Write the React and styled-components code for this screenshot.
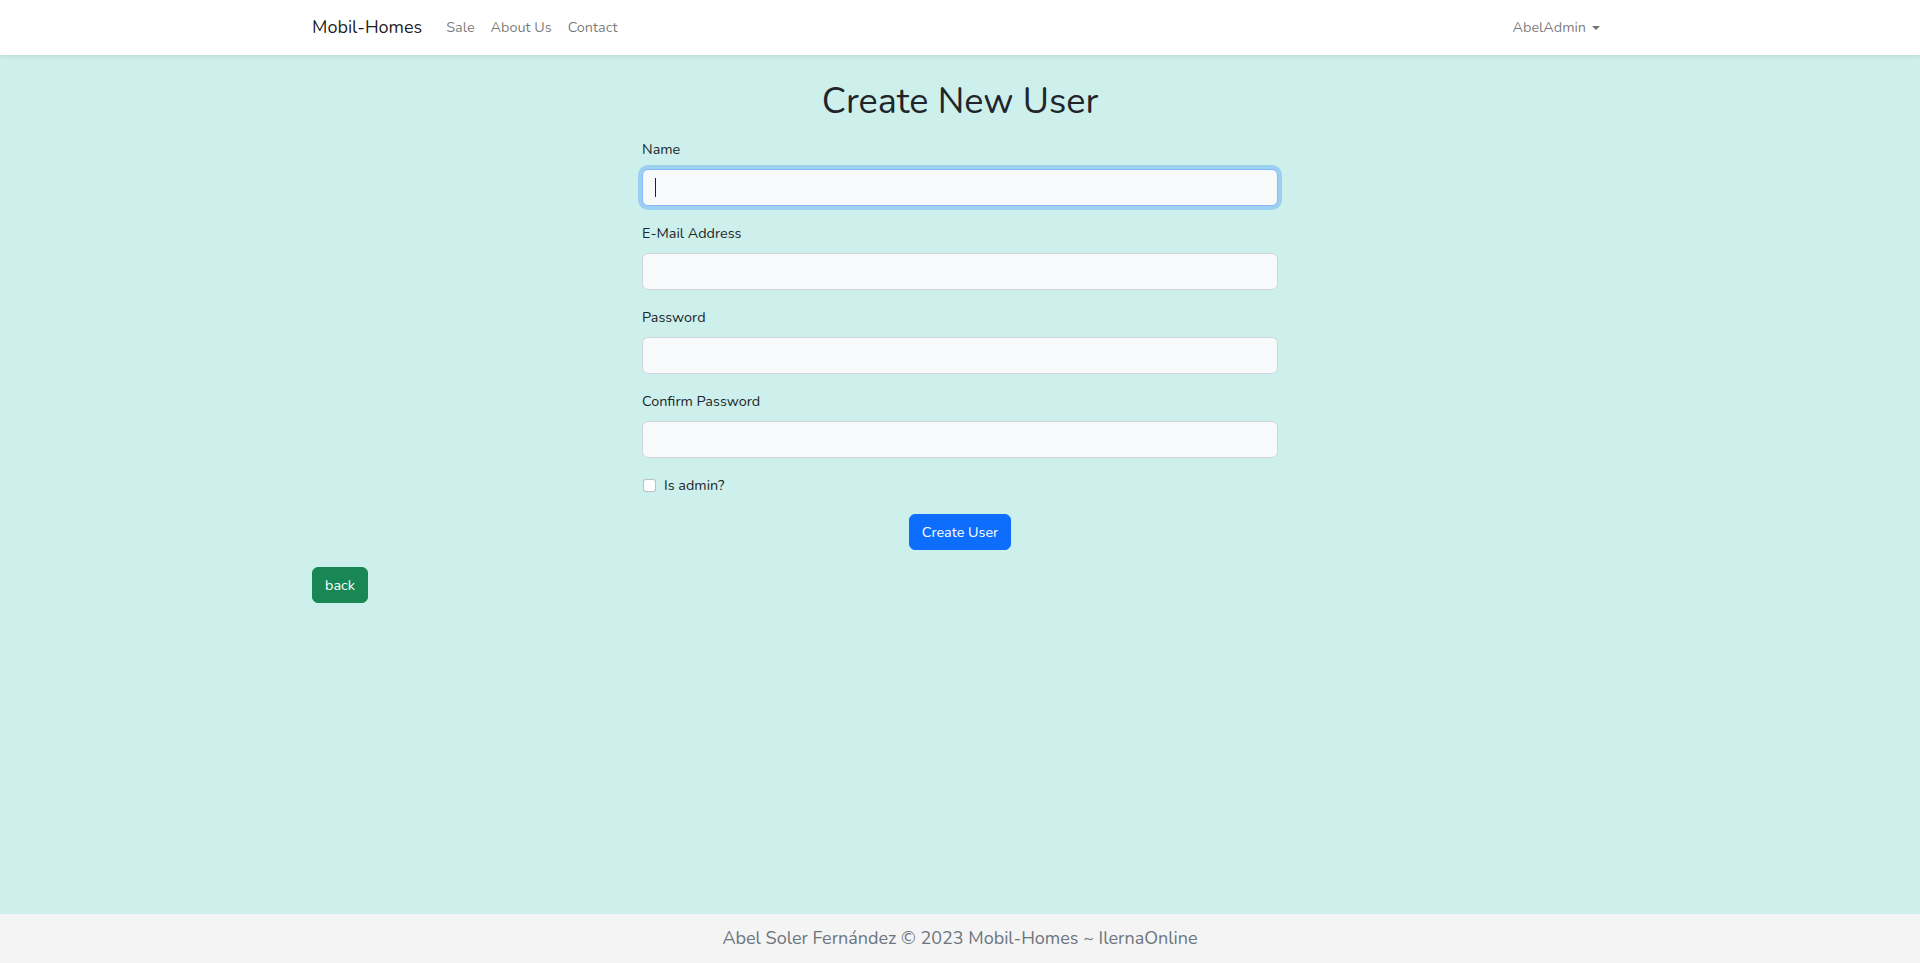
import React from "react";
import styled, { createGlobalStyle } from "styled-components";

const Global = createGlobalStyle`
  * { box-sizing: border-box; }
  html, body { margin: 0; padding: 0; }
  body {
    font-family: "Nunito", Lato, "Noto Sans", sans-serif;
    font-size: 14.4px;
    line-height: 1.6;
    color: #212529;
    background: #cdf0ec;
  }
`;

const Page = styled.div`
  min-height: 100vh;
  display: flex;
  flex-direction: column;
`;

const NavBar = styled.nav`
  height: 55px;
  background: #fff;
  box-shadow: 0 2px 4px rgba(0, 0, 0, 0.075);
  display: flex;
  align-items: center;
`;

const Container = styled.div`
  width: 1320px;
  margin: 0 auto;
  padding: 0 12px;
  display: flex;
  align-items: center;
`;

const Brand = styled.a`
  font-size: 18px;
  color: rgba(0, 0, 0, 0.9);
  text-decoration: none;
  margin-right: 16px;
  padding: 5px 0;
`;

const NavLinks = styled.div`
  display: flex;
  flex: 1;
`;

const NavLink = styled.a`
  color: rgba(0, 0, 0, 0.55);
  text-decoration: none;
  padding: 8px;
  font-size: 14.4px;
  display: flex;
  align-items: center;
`;

const Caret = styled.span`
  display: inline-block;
  margin-left: 6px;
  border-top: 4.3px solid rgba(0, 0, 0, 0.55);
  border-left: 4.3px solid transparent;
  border-right: 4.3px solid transparent;
  margin-top: 1px;
`;

const Main = styled.main`
  flex: 1;
`;

const Title = styled.h1`
  font-size: 36px;
  font-weight: 400;
  line-height: 1.2;
  text-align: center;
  margin: 25px 0 15px;
`;

const Form = styled.form`
  width: 636px;
  margin: 0 auto;
  display: flex;
  flex-direction: column;
`;

const Field = styled.div`
  display: flex;
  flex-direction: column;
  margin-bottom: 16px;
`;

const Label = styled.label`
  font-size: 14.4px;
  line-height: 23px;
  margin-bottom: 8px;
`;

const InputWrap = styled.div`
  position: relative;
  display: flex;
  flex-direction: column;
`;

const TextCaret = styled.span`
  position: absolute;
  left: 13px;
  top: 9px;
  width: 1px;
  height: 19px;
  background: #212529;
  pointer-events: none;
`;

const Input = styled.input`
  height: 37px;
  padding: 5px 12px;
  font: inherit;
  font-size: 14.4px;
  color: #212529;
  background: #f8f9fa;
  border: 1px solid ${(p) => (p.$focused ? "#86b7fe" : "#ced4da")};
  border-radius: 6px;
  outline: none;
  caret-color: transparent;
  box-shadow: ${(p) => (p.$focused ? "0 0 0 4px rgba(13, 110, 253, 0.25)" : "none")};
  &:focus {
    border-color: #86b7fe;
    box-shadow: 0 0 0 4px rgba(13, 110, 253, 0.25);
  }
`;

const CheckRow = styled.div`
  display: flex;
  align-items: center;
  line-height: 23px;
  margin-bottom: 17px;
`;

const Check = styled.span`
  width: 13px;
  height: 13px;
  background: #fff;
  border: 1px solid rgba(0, 0, 0, 0.25);
  border-radius: 3px;
  margin: 0 8px 0 1px;
`;

const Center = styled.div`
  display: flex;
  justify-content: center;
`;

const Button = styled.button`
  font: inherit;
  font-size: 14.4px;
  color: #fff;
  background: ${(p) => p.$bg};
  border: 1px solid ${(p) => p.$bg};
  border-radius: 6px;
  height: 36px;
  padding: 0 12px;
  line-height: 1;
  cursor: pointer;
`;

const BackRow = styled.div`
  width: 1320px;
  margin: 17px auto 0;
  padding: 0 12px;
`;

const Footer = styled.footer`
  height: 49px;
  background: #f4f4f4;
  color: #6c757d;
  font-size: 18px;
  display: flex;
  align-items: center;
  justify-content: center;
`;

export default function App() {
  return (
    <Page>
      <Global />
      <NavBar>
        <Container>
          <Brand href="#">Mobil-Homes</Brand>
          <NavLinks>
            <NavLink href="#">Sale</NavLink>
            <NavLink href="#">About Us</NavLink>
            <NavLink href="#">Contact</NavLink>
          </NavLinks>
          <NavLink href="#">
            AbelAdmin
            <Caret />
          </NavLink>
        </Container>
      </NavBar>
      <Main>
        <Title>Create New User</Title>
        <Form onSubmit={(e) => e.preventDefault()}>
          <Field>
            <Label>Name</Label>
            <InputWrap>
              <Input $focused type="text" />
              <TextCaret />
            </InputWrap>
          </Field>
          <Field>
            <Label>E-Mail Address</Label>
            <Input type="email" />
          </Field>
          <Field>
            <Label>Password</Label>
            <Input type="password" />
          </Field>
          <Field>
            <Label>Confirm Password</Label>
            <Input type="password" />
          </Field>
          <CheckRow>
            <Check />
            <span>Is admin?</span>
          </CheckRow>
          <Center>
            <Button $bg="#0d6efd" type="submit">Create User</Button>
          </Center>
        </Form>
        <BackRow>
          <Button $bg="#198754" type="button">back</Button>
        </BackRow>
      </Main>
      <Footer>Abel Soler Fernández © 2023 Mobil-Homes ~ IlernaOnline</Footer>
    </Page>
  );
}
